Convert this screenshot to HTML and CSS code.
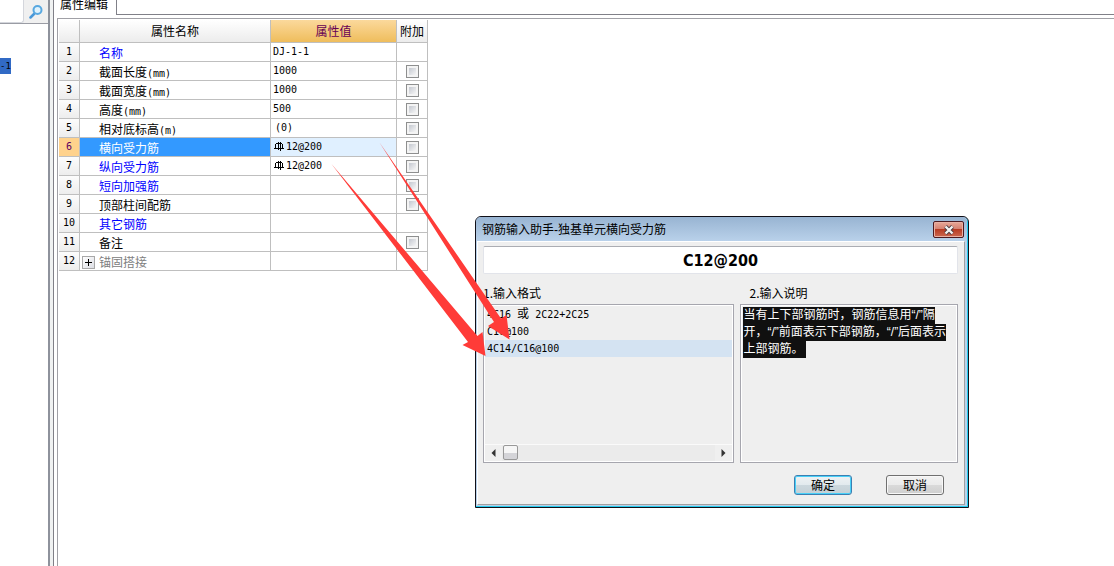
FILE: index.html
```html
<!DOCTYPE html>
<html lang="zh-CN">
<head>
<meta charset="utf-8">
<title>属性编辑</title>
<link rel="stylesheet" href="styles.css">
</head>
<body>
<svg class="defs" width="0" height="0" aria-hidden="true">
  <symbol id="rebar" viewBox="0 0 11 11">
    <path d="M1.500 3v4M4.500 1v8M6.500 1v9M8.500 3v4M2 2.500h6M0 7.500h10" fill="none" stroke="#000" stroke-width="1"/>
  </symbol>
</svg>
<div class="app">
  <aside class="sidebar">
    <div class="search">
      <input class="search-box" type="text" aria-label="搜索">
      <button class="search-btn" type="button" aria-label="查找">
        <svg width="14" height="14" viewBox="0 0 14 14"><path d="M1.500 12.500 5 9" stroke="#4a98d8" stroke-width="2.500" stroke-linecap="round"/><circle cx="8.500" cy="5" r="4" fill="#dff2fd" stroke="#58a8e0" stroke-width="2"/></svg>
      </button>
    </div>
    <div class="tree"><span class="node">-1</span></div>
  </aside>
  <div class="splitter"></div>
  <main class="main">
    <div class="tabs"><button class="tab" type="button">属性编辑</button><div class="tab-rest"></div></div>
    <div class="pane">
      <table class="props">
        <colgroup><col class="c-num"><col class="c-name"><col class="c-value"><col class="c-extra"></colgroup>
        <thead><tr><th></th><th>属性名称</th><th class="active">属性值</th><th>附加</th></tr></thead>
        <tbody>
          <tr><th>1</th><td class="name key">名称</td><td>DJ-1-1</td><td></td></tr>
          <tr><th>2</th><td class="name">截面长度<span class="unit">(mm)</span></td><td>1000</td><td class="check"><input type="checkbox" aria-label="附加 截面长度"></td></tr>
          <tr><th>3</th><td class="name">截面宽度<span class="unit">(mm)</span></td><td>1000</td><td class="check"><input type="checkbox" aria-label="附加 截面宽度"></td></tr>
          <tr><th>4</th><td class="name">高度<span class="unit">(mm)</span></td><td>500</td><td class="check"><input type="checkbox" aria-label="附加 高度"></td></tr>
          <tr><th>5</th><td class="name">相对底标高<span class="unit">(m)</span></td><td class="default">(0)</td><td class="check"><input type="checkbox" aria-label="附加 相对底标高"></td></tr>
          <tr class="selected"><th>6</th><td class="name">横向受力筋</td><td><svg class="rebar" role="img" aria-label="C"><use href="#rebar"/></svg>12@200</td><td class="check"><input type="checkbox" aria-label="附加 横向受力筋"></td></tr>
          <tr><th>7</th><td class="name key">纵向受力筋</td><td><svg class="rebar" role="img" aria-label="C"><use href="#rebar"/></svg>12@200</td><td class="check"><input type="checkbox" aria-label="附加 纵向受力筋"></td></tr>
          <tr><th>8</th><td class="name key">短向加强筋</td><td></td><td class="check"><input type="checkbox" aria-label="附加 短向加强筋"></td></tr>
          <tr><th>9</th><td class="name">顶部柱间配筋</td><td></td><td class="check"><input type="checkbox" aria-label="附加 顶部柱间配筋"></td></tr>
          <tr><th>10</th><td class="name key">其它钢筋</td><td></td><td></td></tr>
          <tr><th>11</th><td class="name">备注</td><td></td><td class="check"><input type="checkbox" aria-label="附加 备注"></td></tr>
          <tr><th>12</th><td class="name group"><div class="group-row"><button class="expand" type="button" aria-label="展开"><svg width="9" height="9" viewBox="0 0 9 9"><path d="M1 4.500h7M4.500 1v7" stroke="#000"/></svg></button>锚固搭接</div></td><td></td><td></td></tr>
        </tbody>
      </table>
    </div>
  </main>
</div>

<section class="dialog" role="dialog" aria-labelledby="dlg-title">
  <header class="titlebar">
    <h1 id="dlg-title">钢筋输入助手-独基单元横向受力筋</h1>
    <button class="close" type="button" aria-label="关闭"><svg width="12" height="10" viewBox="0 0 12 10"><path d="M2.500 1.500l7 7M9.500 1.500l-7 7" stroke="#4a3a40" stroke-width="4"/><path d="M2.500 1.500l7 7M9.500 1.500l-7 7" stroke="#f4f4f4" stroke-width="2.400"/></svg></button>
  </header>
  <div class="client">
    <input class="formula" type="text" value="C12@200" aria-label="钢筋信息">
    <div class="columns">
      <div class="col formats">
        <h2>1.输入格式</h2>
        <div class="box list-box">
          <ul class="list" role="listbox" aria-label="输入格式">
            <li role="option">4C16 <span class="cjk">或</span> 2C22+2C25</li>
            <li role="option">C16@100</li>
            <li class="current" role="option" aria-selected="true">4C14/C16@100</li>
          </ul>
          <div class="scrollbar">
            <button type="button" aria-label="向左"><svg width="5" height="8" viewBox="0 0 5 8"><path d="M4.500 0v8L.5 4z" fill="#333"/></svg></button>
            <div class="track"><div class="thumb"></div></div>
            <button type="button" aria-label="向右"><svg width="5" height="8" viewBox="0 0 5 8"><path d="M.5 0v8l4-4z" fill="#333"/></svg></button>
          </div>
        </div>
      </div>
      <div class="col notes">
        <h2>2.输入说明</h2>
        <div class="box note-box">
          <p><span>当有上下部钢筋时，钢筋信息用“/”隔</span><span>开，“/”前面表示下部钢筋，“/”后面表示</span><span class="last">上部钢筋。</span></p>
        </div>
      </div>
    </div>
    <footer class="actions">
      <button class="btn primary" type="button">确定</button>
      <button class="btn" type="button">取消</button>
    </footer>
  </div>
</section>

<svg class="arrows" width="520" height="370" viewBox="0 0 520 370" aria-hidden="true">
  <path d="M379.500 142.500 494 322 488 326 509.500 339.500 506.500 315 501 318.500z" fill="#ff3b38"/>
  <path d="M331.500 164 468 342 462.500 345 485.500 356 482.500 332 477.500 336z" fill="#ff3b38"/>
</svg>
</body>
</html>
```
FILE: styles.css
```css
* { box-sizing: border-box; }
body {
  margin: 0;
  background: #fff;
  color: #000;
  font: 12px/16px "Liberation Sans", "Noto Sans CJK SC", sans-serif;
  overflow: hidden;
}
button, input { font: inherit; color: inherit; margin: 0; padding: 0; }
.defs { position: absolute; }
.app { display: flex; height: 100vh; }

.sidebar { width: 48px; flex: none; }
.search {
  display: flex;
  height: 24px;
  background: #f0f0f0;
  border-bottom: 1px solid #9a9ca4;
}
.search-box {
  width: 24px;
  height: 23px;
  border: 1px solid #d4d6dc;
  border-width: 0 1px 1px 0;
  border-radius: 0 0 3px 0;
  background: #fff;
}
.search-btn {
  flex: 1;
  display: flex;
  align-items: center;
  justify-content: center;
  border: 0;
  background: none;
}
.tree { padding-top: 34px; }
.node {
  display: block;
  width: 11px;
  background: #316ac5;
  font-family: "DejaVu Sans Mono", monospace;
  font-size: 9px;
}
.splitter {
  width: 6px;
  flex: none;
  background: #f0f2f2;
  border-left: 2px solid #8e929c;
  border-right: 1px solid #808088;
}

.main { flex: 1; min-width: 0; display: flex; flex-direction: column; }
.tabs { display: flex; height: 15px; align-items: stretch; }
.tab {
  width: 63px;
  border: 0;
  border-right: 1px solid #808088;
  background: #fff;
  text-align: left;
  padding-left: 6px;
  line-height: 10px;
  padding-bottom: 5px;
}
.tab-rest { flex: 1; border-bottom: 1px solid #808088; }
.pane {
  flex: 1;
  margin: 3px 0 0 3px;
  padding: 1px;
  border: solid #a0a0a6;
  border-width: 1px 0 0 1px;
}

.props { table-layout: fixed; width: 369px; border-spacing: 0; }
.c-num { width: 21px; }
.c-name { width: 191px; }
.c-value { width: 126px; }
.c-extra { width: 31px; }
.props th, .props td {
  height: 19px;
  padding: 0;
  border: solid #bfbfbf;
  border-width: 0 1px 1px 0;
  font-weight: normal;
  line-height: 18px;
  white-space: nowrap;
}
.props thead th {
  height: 23px;
  padding-top: 2px;
  font-size: 12px;
  background: linear-gradient(#fff, #ececec);
}
.props thead .active {
  background: linear-gradient(#fbd99c, #efbd5c);
  color: #660055;
}
.props tbody th {
  background: linear-gradient(#fcfcfc, #ededed);
  font-family: "DejaVu Sans Mono", monospace;
  font-size: 10px;
}
.props td {
  padding-left: 2px;
  font-family: "DejaVu Sans Mono", monospace;
  font-size: 10px;
}
.props td.default { padding-left: 4px; }
.props td.name {
  padding: 2px 0 0 19px;
  font-family: "Noto Sans CJK SC", sans-serif;
  font-size: 12px;
  line-height: 16px;
}
.props .unit {
  font-family: "DejaVu Sans Mono", monospace;
  font-size: 10px;
  line-height: 10px;
}
.props .key { color: #00f; }
.props td.group { padding-left: 2px; color: #808080; }
.group-row { display: flex; align-items: center; gap: 4px; }
.expand {
  width: 13px;
  height: 13px;
  display: flex;
  align-items: center;
  justify-content: center;
  border: 1px solid #a8a8a8;
  background: linear-gradient(135deg, #fff, #dcdee4);
}
.props .selected th { background: #ffd28c; color: #600060; }
.props .selected td.name { background: #39f; color: #fff; }
.props .selected td:nth-child(3) { background: #e0f0ff; }
.rebar { width: 11px; height: 11px; margin: 0 1px; vertical-align: -2px; }
.props td.check { padding: 0; text-align: center; line-height: 0; }
.check input {
  appearance: none;
  width: 13px;
  height: 13px;
  vertical-align: middle;
  border: 1px solid #8e8f8f;
  background: linear-gradient(135deg, #c4c8d0, #f6f6f6) content-box, #f4f4f4;
  padding: 2px;
}

.dialog {
  position: absolute;
  left: 475px;
  top: 216px;
  width: 494px;
  border: 1px solid #101018;
  border-radius: 6px 6px 0 0;
  background: #b9d1ea;
  box-shadow: inset -1px -1px #22ccee;
  padding: 0 3px 2px 1px;
}
.titlebar {
  display: flex;
  align-items: center;
  justify-content: space-between;
  height: 24px;
  padding: 1px 3px 0 6px;
  margin: 0 -2px 0 -1px;
  border-radius: 5px 5px 0 0;
  background: linear-gradient(#98b4d2, #b9d1ea);
}
.titlebar h1 { margin: 0; font-size: 12px; font-weight: normal; }
.close {
  width: 31px;
  height: 17px;
  display: flex;
  align-items: center;
  justify-content: center;
  border: 1px solid #4c1a20;
  border-radius: 2px;
  background: linear-gradient(#e8a898, #d58070 48%, #b83c24 50%, #cc6850);
  box-shadow: inset 0 0 0 1px #e8b0a4;
}
.client {
  background: #efefef;
  border: solid #fff;
  border-width: 1px 0 0 1px;
  padding: 4px 6px 9px 5px;
  border-bottom: 1px solid #a0a0a0;
  border-right: 1px solid #a0a0a0;
}
.formula {
  display: block;
  width: 100%;
  height: 28px;
  border: 1px solid #e2e4ea;
  border-top-color: #abadb3;
  border-radius: 2px;
  background: #fff;
  text-align: center;
  font: bold 16px/24px "DejaVu Sans Condensed", "DejaVu Sans", sans-serif;
}
.columns { display: flex; gap: 6px; padding-top: 11px; }
.col { display: flex; flex-direction: column; }
.formats { flex: 252; }
.notes { flex: 218; }
.col h2 {
  margin: 0 0 3px;
  font: 12px/16px "Noto Sans CJK SC", sans-serif;
}
.notes h2 { padding-left: 9px; }
.box {
  height: 159px;
  border: 1px solid #a6a6ae;
  box-shadow: inset 0 0 0 1px #fff;
  padding: 1px;
}
.list-box { display: flex; flex-direction: column; justify-content: space-between; }
.list { list-style: none; margin: 0; padding: 0; }
.list li {
  height: 17px;
  padding-left: 2px;
  font: 10px/17px "DejaVu Sans Mono", monospace;
  white-space: nowrap;
}
.list .cjk { font: 12px/12px "Noto Sans CJK SC", sans-serif; }
.list .current { background: #d4e3f2; }
.scrollbar { display: flex; height: 17px; background: #ebebeb; border-top: 1px solid #fafafa; }
.scrollbar button {
  width: 17px;
  display: flex;
  align-items: center;
  justify-content: center;
  border: 0;
  background: #efefef;
}
.track { flex: 1; }
.thumb {
  width: 15px;
  height: 15px;
  margin-left: 1px;
  border: 1px solid #989898;
  border-radius: 2px;
  background: linear-gradient(#f6f6f6 50%, #d4d4d8 50%);
}
.note-box { padding: 2px; }
.note-box p { margin: 0; line-height: 17px; color: #fff; white-space: nowrap; }
.note-box span { display: block; width: fit-content; background: #101010; }
.note-box .last { padding-right: 3px; }
.actions { display: flex; justify-content: flex-end; gap: 34px; padding: 12px 14px 0 0; }
.btn {
  width: 58px;
  height: 20px;
  padding-top: 1px;
  line-height: 16px;
  border: 1px solid #707070;
  border-radius: 3px;
  background: linear-gradient(#f2f2f2, #ebebeb 50%, #dadada 50%, #cfcfcf);
  box-shadow: inset 0 0 0 1px #f8f8f8;
}
.btn.primary {
  border-color: #3c7fb1;
  background: linear-gradient(#eef2f4, #e2eaee 50%, #ccd8de 50%, #c4d0d6);
  box-shadow: inset 0 0 0 1px #48d0f8;
}
.arrows { position: absolute; left: 0; top: 0; pointer-events: none; }
```
